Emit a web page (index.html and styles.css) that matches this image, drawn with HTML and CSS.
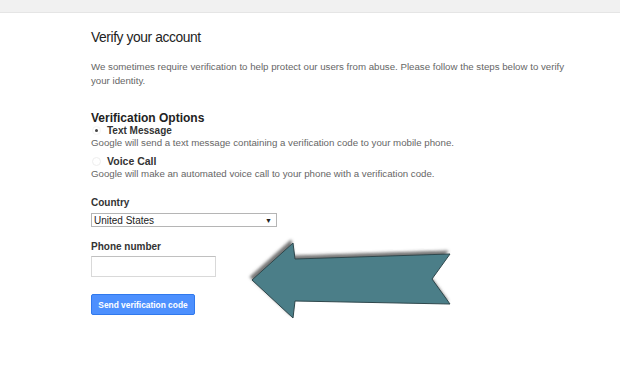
FILE: index.html
```html
<!DOCTYPE html>
<html>
<head>
<meta charset="utf-8">
<link rel="stylesheet" href="styles.css">
</head>
<body>
<div class="topbar"></div>
<main class="content">
  <h1 class="title">Verify your account</h1>
  <p class="intro">We sometimes require verification to help protect our users from abuse. Please follow the steps below to verify your identity.</p>
  <h2 class="section">Verification Options</h2>
  <div class="option first">
    <div class="option-head"><span class="radio checked"></span><span class="option-label">Text Message</span></div>
    <div class="option-desc">Google will send a text message containing a verification code to your mobile phone.</div>
  </div>
  <div class="option second">
    <div class="option-head"><span class="radio"></span><span class="option-label big">Voice Call</span></div>
    <div class="option-desc">Google will make an automated voice call to your phone with a verification code.</div>
  </div>
  <div class="field country">
    <div class="field-label">Country</div>
    <div class="select"><span>United States</span><span class="caret">&#9660;</span></div>
  </div>
  <div class="field phone">
    <div class="field-label">Phone number</div>
    <div class="input"></div>
  </div>
  <button class="btn">Send verification code</button>
</main>
<svg class="arrow" width="220" height="100" viewBox="240 230 220 100">
  <defs>
    <filter id="sh" x="-20%" y="-30%" width="140%" height="160%">
      <feDropShadow dx="-2" dy="-3" stdDeviation="1.6" flood-color="#555" flood-opacity="0.8"/>
    </filter>
  </defs>
  <polygon points="252,280 293,243 295,259 450,254 432,279 450,304 295,301 293,318" fill="#4b7e88" stroke="#2e474c" stroke-width="1" filter="url(#sh)"/>
</svg>
</body>
</html>
```
FILE: styles.css
```css
html, body { margin: 0; padding: 0; background: #fff; }
body { font-family: "Liberation Sans", Arial, sans-serif; color: #222; width: 620px; height: 368px; position: relative; overflow: hidden; }
.topbar { height: 12px; background: #f1f1f1; border-bottom: 1px solid #e5e5e5; }
.content { padding: 16px 0 0 91px; width: 490px; }
.title { font-size: 13.8px; font-weight: normal; margin: 0; line-height: 18px; color: #222; letter-spacing: -0.4px; }
.intro { font-size: 9.7px; line-height: 14px; color: #666; margin: 13px 0 0; }
.section { font-size: 12px; font-weight: bold; margin: 23px 0 0; line-height: 14px; color: #222; }
.option.first { margin-top: -1px; }
.option.second { margin-top: 5px; }
.option-head { display: flex; align-items: center; height: 12px; }
.radio { width: 9px; height: 9px; border-radius: 50%; border: 1px solid #eee; box-sizing: border-box; position: relative; margin: 0 6px 0 1px; }
.radio.checked { border-color: #f4f4f4; }
.radio.checked::after { content: ""; position: absolute; left: 2px; top: 2px; width: 3px; height: 3px; border-radius: 50%; background: #444; }
.option-label { font-size: 10px; font-weight: bold; color: #333; }
.option-label.big { font-size: 10.5px; }
.option-desc { font-size: 9.7px; line-height: 14px; color: #666; }
.field.country { margin-top: 15px; }
.field.phone { margin-top: 13px; }
.field-label { font-size: 10px; font-weight: bold; color: #333; line-height: 14px; }
.select { margin-top: 3px; width: 186px; height: 14px; border: 1px solid #b5b5b5; box-sizing: border-box; display: flex; justify-content: space-between; align-items: center; font-size: 10px; color: #222; padding: 0 4px 0 2px; }
.caret { font-size: 7px; }
.input { margin-top: 2px; width: 125px; height: 21px; border: 1px solid #d9d9d9; border-top-color: #c0c0c0; box-sizing: border-box; }
.btn { margin-top: 17px; width: 104px; height: 21px; background: #4d90fe; border: 1px solid #3079ed; border-radius: 2px; color: #fff; font-family: "Liberation Sans", Arial, sans-serif; font-weight: bold; font-size: 8.4px; padding: 0; display: block; }
.arrow { position: absolute; left: 240px; top: 230px; }
```
